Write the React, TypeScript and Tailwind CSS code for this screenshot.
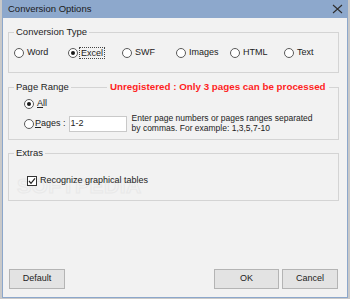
import React from "react";

const F = { fontFamily: '"Liberation Sans", Arial, sans-serif' };

function Radio({ checked }: { checked?: boolean }) {
  return (
    <span className="relative inline-flex h-[10px] w-[10px] shrink-0 items-center justify-center rounded-full border border-[#5a5a5a] bg-white">
      {checked && <span className="h-[4px] w-[4px] rounded-full bg-[#1a1a1a]" />}
    </span>
  );
}

function Group({
  label,
  className,
  children,
  extra,
}: {
  label: string;
  className: string;
  children: React.ReactNode;
  extra?: React.ReactNode;
}) {
  return (
    <div className={`relative w-[331px] border border-[#d4d4d4] ${className}`}>
      <span className="absolute left-[5px] top-[-7px] bg-[#f2f2f2] px-[2px] text-[9.5px] leading-[12px] text-[#1e1e1e]">
        {label}
      </span>
      {extra}
      {children}
    </div>
  );
}

export default function App() {
  const types = ["Word", "Excel", "SWF", "Images", "HTML", "Text"];
  return (
    <div className="relative flex h-[299px] w-[350px] bg-[#c9c9c9]" style={F}>
      <div className="ml-[2px] flex h-[298px] w-[346px] flex-col border-x border-b border-[#8ca7cb] bg-[#f2f2f2]">
        {/* title bar */}
        <div className="flex h-[18px] shrink-0 items-center justify-between bg-[#8da8cc] pl-[5px] pr-[4px]">
          <span className="text-[9.5px] text-[#1a1a1a]">Conversion Options</span>
          <svg width="11" height="10" viewBox="0 0 11 10" className="mt-[-1px]">
            <path d="M1 1 L10 9 M10 1 L1 9" stroke="#2e2e2e" strokeWidth="1.1" fill="none" />
          </svg>
        </div>

        {/* client */}
        <div className="relative flex flex-1 flex-col pl-[5px]">
          {/* watermark */}
          <span className="pointer-events-none absolute left-[14px] top-[157px] select-none text-[21px] font-bold leading-none tracking-[0.5px] text-transparent [-webkit-text-stroke:1px_#e9e9e9]">
            SOFTPEDIA
          </span>

          <Group label="Conversion Type" className="mt-[14px] h-[41px]">
            <div className="flex h-full items-center pl-[5px] pt-[1px]">
              {types.map((t, i) => (
                <div key={t} className="flex w-[54px] shrink-0 items-center">
                  <Radio checked={i === 1} />
                  {i === 1 ? (
                    <span className="ml-[1px] border border-dotted border-[#444] px-[1px] text-[9px] leading-[10px] text-[#222]">
                      {t}
                    </span>
                  ) : (
                    <span className="ml-[3px] text-[9px] text-[#222]">{t}</span>
                  )}
                </div>
              ))}
            </div>
          </Group>

          <Group
            label="Page Range"
            className="mt-[14px] h-[53px]"
            extra={
              <span className="absolute left-[98px] top-[-7px] bg-[#f2f2f2] px-[3px] text-[9.8px] font-bold leading-[12px] text-[#ff1f1f]">
                Unregistered : Only 3 pages can be processed
              </span>
            }
          >
            <div className="flex flex-col pl-[15px] pt-[11px]">
              <div className="flex h-[10px] items-center">
                <Radio checked />
                <span className="ml-[3px] text-[9px] text-[#222]">
                  <span className="underline">A</span>ll
                </span>
              </div>
              <div className="mt-[5px] flex items-center">
                <Radio />
                <span className="ml-[1px] text-[9px] text-[#222]">
                  <span className="underline">P</span>ages :
                </span>
                <div className="ml-[3px] flex h-[16px] w-[58px] items-center border border-[#c9c9c9] bg-white pl-[1px] text-[9px] text-[#222]">
                  1-2
                </div>
                <div className="ml-[5px] text-[8.5px] leading-[9.5px] text-[#222]">
                  Enter page numbers or pages ranges separated
                  <br />
                  by commas. For example: 1,3,5,7-10
                </div>
              </div>
            </div>
          </Group>

          <Group label="Extras" className="mt-[13px] h-[48px]">
            <div className="relative flex items-center pl-[18px] pt-[20px]">
              <span className="flex h-[10px] w-[10px] items-center justify-center border border-[#333] bg-white">
                <svg width="8" height="8" viewBox="0 0 8 8">
                  <path d="M1 4 L3 6.3 L7 1.3" stroke="#222" strokeWidth="1.2" fill="none" />
                </svg>
              </span>
              <span className="ml-[3px] text-[9px] text-[#222]">Recognize graphical tables</span>
            </div>
          </Group>

          {/* buttons */}
          <div className="mt-auto mb-[8px] flex items-center pl-[1px] pr-[9px]">
            <button className="h-[20px] w-[56px] border border-[#b4b4b4] bg-[#e3e3e3] text-[9px] text-[#222]">
              Default
            </button>
            <div className="flex-1" />
            <button className="h-[20px] w-[65px] border border-[#b4b4b4] bg-[#e3e3e3] text-[9px] text-[#222]">
              OK
            </button>
            <button className="ml-[3px] h-[20px] w-[56px] border border-[#b4b4b4] bg-[#e3e3e3] text-[9px] text-[#222]">
              Cancel
            </button>
          </div>
        </div>
      </div>
    </div>
  );
}
